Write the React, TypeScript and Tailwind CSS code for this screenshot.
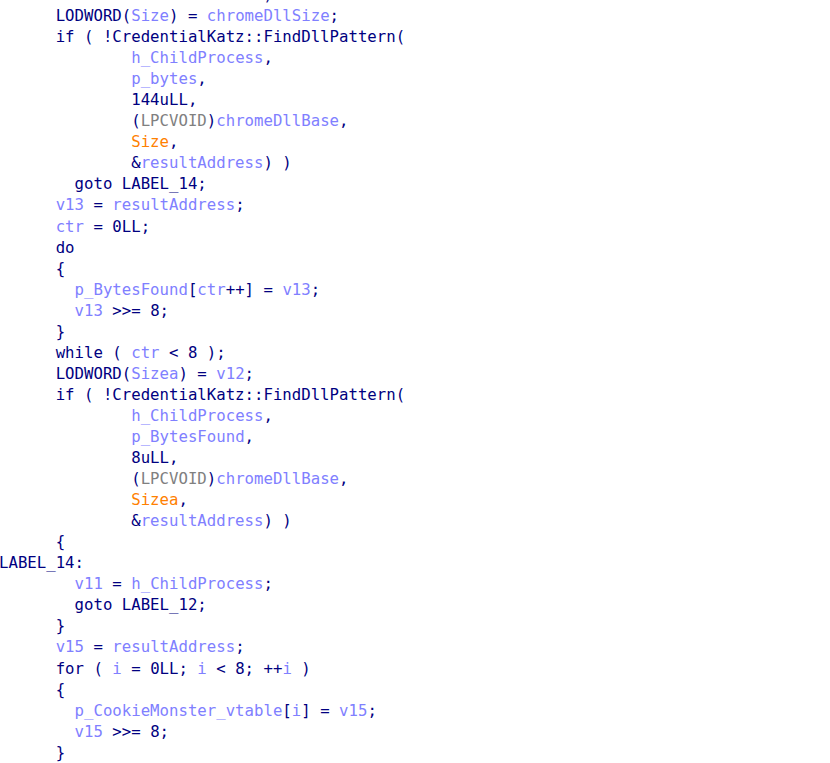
import React from 'react';

type Kind = 'n' | 'v' | 'g' | 'o';
type Token = [string, Kind];

const colors: Record<Kind, string> = {
  n: 'text-[#000080]',
  v: 'text-[#8080ff]',
  g: 'text-[#808080]',
  o: 'text-[#ff8000]',
};

const I6 = '      ';
const I8 = '        ';
const I14 = '              ';

const lines: Token[][] = [
  [['                            )', 'n']],
  [[I6 + 'LODWORD(', 'n'], ['Size', 'v'], [') = ', 'n'], ['chromeDllSize', 'v'], [';', 'n']],
  [[I6 + 'if ( !CredentialKatz::FindDllPattern(', 'n']],
  [[I14, 'n'], ['h_ChildProcess', 'v'], [',', 'n']],
  [[I14, 'n'], ['p_bytes', 'v'], [',', 'n']],
  [[I14 + '144uLL,', 'n']],
  [[I14 + '(', 'n'], ['LPCVOID', 'g'], [')', 'n'], ['chromeDllBase', 'v'], [',', 'n']],
  [[I14, 'n'], ['Size', 'o'], [',', 'n']],
  [[I14 + '&', 'n'], ['resultAddress', 'v'], [') )', 'n']],
  [[I8 + 'goto LABEL_14;', 'n']],
  [[I6, 'n'], ['v13', 'v'], [' = ', 'n'], ['resultAddress', 'v'], [';', 'n']],
  [[I6, 'n'], ['ctr', 'v'], [' = 0LL;', 'n']],
  [[I6 + 'do', 'n']],
  [[I6 + '{', 'n']],
  [[I8, 'n'], ['p_BytesFound', 'v'], ['[', 'n'], ['ctr', 'v'], ['++] = ', 'n'], ['v13', 'v'], [';', 'n']],
  [[I8, 'n'], ['v13', 'v'], [' >>= 8;', 'n']],
  [[I6 + '}', 'n']],
  [[I6 + 'while ( ', 'n'], ['ctr', 'v'], [' < 8 );', 'n']],
  [[I6 + 'LODWORD(', 'n'], ['Sizea', 'v'], [') = ', 'n'], ['v12', 'v'], [';', 'n']],
  [[I6 + 'if ( !CredentialKatz::FindDllPattern(', 'n']],
  [[I14, 'n'], ['h_ChildProcess', 'v'], [',', 'n']],
  [[I14, 'n'], ['p_BytesFound', 'v'], [',', 'n']],
  [[I14 + '8uLL,', 'n']],
  [[I14 + '(', 'n'], ['LPCVOID', 'g'], [')', 'n'], ['chromeDllBase', 'v'], [',', 'n']],
  [[I14, 'n'], ['Sizea', 'o'], [',', 'n']],
  [[I14 + '&', 'n'], ['resultAddress', 'v'], [') )', 'n']],
  [[I6 + '{', 'n']],
  [['LABEL_14:', 'n']],
  [[I8, 'n'], ['v11', 'v'], [' = ', 'n'], ['h_ChildProcess', 'v'], [';', 'n']],
  [[I8 + 'goto LABEL_12;', 'n']],
  [[I6 + '}', 'n']],
  [[I6, 'n'], ['v15', 'v'], [' = ', 'n'], ['resultAddress', 'v'], [';', 'n']],
  [[I6 + 'for ( ', 'n'], ['i', 'v'], [' = 0LL; ', 'n'], ['i', 'v'], [' < 8; ++', 'n'], ['i', 'v'], [' )', 'n']],
  [[I6 + '{', 'n']],
  [[I8, 'n'], ['p_CookieMonster_vtable', 'v'], ['[', 'n'], ['i', 'v'], ['] = ', 'n'], ['v15', 'v'], [';', 'n']],
  [[I8, 'n'], ['v15', 'v'], [' >>= 8;', 'n']],
  [[I6 + '}', 'n']],
];

const App: React.FC = () => {
  return (
    <div className="w-[830px] h-[763px] overflow-hidden bg-white">
      <div className="mt-[-16px] ml-[-1px] font-['DejaVu_Sans_Mono',monospace] text-[15.7px]">
        {lines.map((line, i) => (
          <div key={i} className="h-[21.05px] leading-[21.05px] whitespace-pre">
            {line.map(([text, kind], j) => (
              <span key={j} className={colors[kind]}>
                {text}
              </span>
            ))}
          </div>
        ))}
      </div>
    </div>
  );
};

export default App;
